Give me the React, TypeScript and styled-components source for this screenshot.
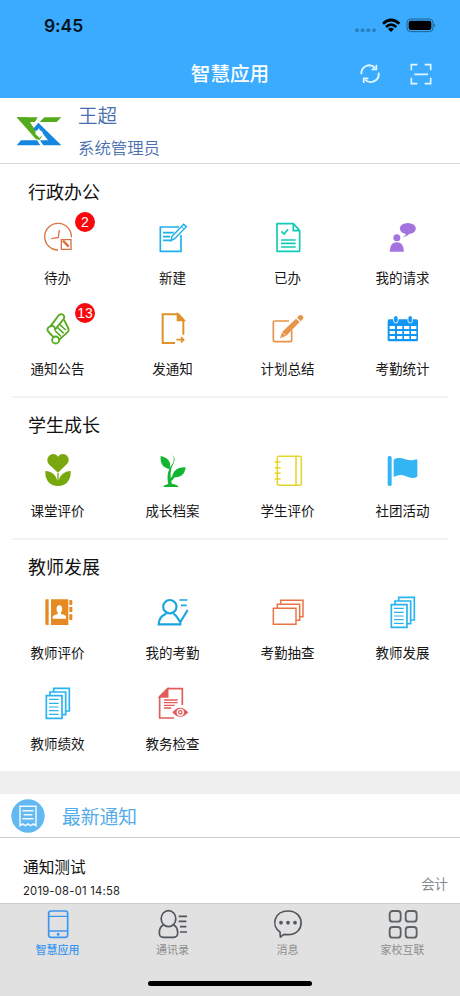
import React from 'react';
import styled, { createGlobalStyle } from 'styled-components';

const GlobalStyle = createGlobalStyle`
  * { box-sizing: border-box; }
  body {
    margin: 0;
    background: #fff;
    font-family: Inter, "Noto Sans CJK SC", sans-serif;
  }
`;

const Screen = styled.div`
  width: 460px;
  height: 996px;
  display: flex;
  flex-direction: column;
  overflow: hidden;
  background: #fff;
`;

const Header = styled.header`
  height: 98px;
  flex: none;
  background: #3aabff;
`;

const StatusBar = styled.div`
  height: 50px;
  padding: 1px 24px 0 44px;
  display: flex;
  align-items: center;
  justify-content: space-between;
`;

const Clock = styled.span`
  font-size: 17.5px;
  line-height: 22px;
  font-weight: 600;
  letter-spacing: -0.1px;
  color: #06121c;
`;

const NavBar = styled.div`
  height: 48px;
  display: grid;
  grid-template-columns: 1fr auto 1fr;
  align-items: center;
`;

const NavTitle = styled.h1`
  grid-column: 2;
  margin: 0;
  font-size: 19.6px;
  line-height: 28px;
  font-weight: 500;
  color: #fff;
`;

const NavActions = styled.div`
  display: flex;
  justify-content: flex-end;
  gap: 30px;
  padding-right: 28px;
`;

const Profile = styled.section`
  height: 66px;
  flex: none;
  display: flex;
  padding-left: 16px;
  gap: 16px;
  border-bottom: 1.5px solid #dadada;
`;

const Logo = styled.svg`
  width: 46px;
  height: 30px;
  margin-top: 18px;
`;

const ProfileText = styled.div`
  color: #4a6fae;
  font-weight: 350;
`;

const Name = styled.div`
  padding-top: 1px;
  font-size: 19.6px;
  line-height: 34px;
`;

const Role = styled.div`
  font-size: 16.4px;
  line-height: 30px;
`;

const Section = styled.section`
  flex: none;
  display: flow-root;
`;

const SectionTitle = styled.h2`
  margin: 17px 0 10px 28px;
  font-size: 18px;
  line-height: 24px;
  font-weight: 400;
  color: #111;
`;

const Grid = styled.div`
  display: grid;
  grid-template-columns: repeat(4, 1fr);
`;

const Tile = styled.div`
  height: 91px;
  padding-top: 7px;
  display: flex;
  flex-direction: column;
  align-items: center;
  gap: 14px;
`;

const IconBox = styled.div`
  position: relative;
  width: 32px;
  height: 32px;
`;

const IconSvg = styled.svg`
  display: block;
  width: 32px;
  height: 32px;
  overflow: visible;
`;

const Badge = styled.span`
  position: absolute;
  left: 33.5px;
  top: -10px;
  width: 20px;
  height: 20px;
  border-radius: 50%;
  background: #f8070c;
  color: #fff;
  font-family: "Liberation Sans", sans-serif;
  font-size: 14px;
  line-height: 20px;
  text-align: center;
`;

const TileLabel = styled.span`
  font-size: 13.5px;
  line-height: 20px;
  color: #161616;
`;

const Divider = styled.div`
  flex: none;
  height: 2px;
  margin: -1px 12px;
  background: #f3f3f3;
`;

const Gap = styled.div`
  flex: none;
  height: 23px;
  margin-top: -1px;
  background: #efefef;
`;

const NoticeHead = styled.div`
  flex: none;
  height: 44px;
  padding-left: 11px;
  display: flex;
  align-items: center;
  gap: 17px;
  border-bottom: 1px solid #cfcfcf;
`;

const NoticeTitle = styled.h2`
  margin: 0;
  padding-top: 4px;
  font-size: 18.8px;
  line-height: 28px;
  font-weight: 400;
  color: #53ace9;
`;

const NoticeItem = styled.article`
  flex: 1;
  display: flex;
  justify-content: space-between;
  padding: 17px 12px 0 23px;
`;

const ItemTitle = styled.div`
  font-size: 15.7px;
  line-height: 26px;
  color: #111;
`;

const ItemDate = styled.div`
  font-size: 11.2px;
  line-height: 20px;
  letter-spacing: 0.25px;
  color: #222;
`;

const Author = styled.div`
  padding-top: 19px;
  font-size: 13.4px;
  line-height: 20px;
  color: #83898f;
`;

const TabBar = styled.nav`
  flex: none;
  height: 93px;
  background: #e1e1e1;
  border-top: 1px solid #cbcbcb;
`;

const Tabs = styled.div`
  height: 76px;
  display: grid;
  grid-template-columns: repeat(4, 1fr);
`;

const Tab = styled.div<{ $active?: boolean }>`
  padding-top: 4px;
  display: flex;
  flex-direction: column;
  align-items: center;
  gap: 2px;
  font-size: 11px;
  line-height: 16px;
  font-weight: ${p => (p.$active ? 500 : 400)};
  color: ${p => (p.$active ? '#3c97ef' : '#8e8e8e')};
`;

const HomeIndicator = styled.div`
  width: 164px;
  height: 5px;
  margin: 1px auto 0;
  border-radius: 3px;
  background: #000;
`;

type IconProps = { color: string; w?: number; children: React.ReactNode };

const LineIcon = ({ color, w = 5, children }: IconProps) => (
  <IconSvg viewBox="0 0 96 96" fill="none" stroke={color} strokeWidth={w}>
    {children}
  </IconSvg>
);

const PendingIcon = () => (
  <LineIcon color="#d9733f" w={4}>
    <path d="M88 46A40 40 0 1 0 48 84" />
    <path d="M52 24L49 46L28 50" />
    <path d="M58 53H87V82H58Z" />
    <path d="M63 56L80 74" strokeWidth="7" />
  </LineIcon>
);

const CreateIcon = () => (
  <LineIcon color="#1fb0ea">
    <path d="M66 15H10V88H72V39" />
    <path d="M18 32H50M18 44H39M18 55H41" />
    <path d="M42 56L45 43L80 7L88 14L53 50Z" strokeWidth="4.5" />
    <path d="M73 14L81 21" strokeWidth="3" />
  </LineIcon>
);

const DoneIcon = () => (
  <LineIcon color="#10ccb4">
    <path d="M15 5H64L83 26V88H15Z" strokeLinejoin="round" />
    <path d="M64 6V26H83" />
    <path d="M28 28L36 36L48 22M27 54H71M27 64H71M27 75H71" />
  </LineIcon>
);

const RequestIcon = () => (
  <IconSvg viewBox="0 0 96 96" fill="#a373df">
    <ellipse cx="62.5" cy="19.5" rx="24" ry="16.5" />
    <path d="M54 32L57 38L48 45Q62 43 69 33Z" />
    <circle cx="29.5" cy="47" r="10.5" />
    <path d="M8 89Q9 61 29.5 61Q50 61 51 89Z" />
  </IconSvg>
);

const ScrollIcon = () => (
  <LineIcon color="#55ab1d" w={5.5}>
    <path d="M25 40L51 6C60-1 71 8 65 18L39 50" />
    <path d="M25 40C15 43 14 51 20 57L36 74M25 40C35 36 42 44 38 52" />
    <path d="M66 20L80 48Q81 53 76 58L52 80" />
    <circle cx="41" cy="81" r="10.5" />
    <path d="M39 53L57 70M47 44L65 61M54 35L71 51" strokeWidth="4.5" />
  </LineIcon>
);

const SendIcon = () => (
  <LineIcon color="#df922a" w={6}>
    <path d="M54 90H17V4H64L79 20V65" />
    <path d="M62 4V22H80Z" fill="#df922a" />
    <path d="M58 80H80M72 72L80 80L72 88" strokeWidth="5" />
  </LineIcon>
);

const PlanIcon = () => (
  <LineIcon color="#e8944a">
    <path d="M51 24H9Q4 24 4 29V81Q4 86 9 86H54Q59 86 59 81V52" />
    <path d="M24 76L31 56L72 17L83 27L43 68Z" fill="#e8944a" stroke="none" />
    <path d="M75 14L82 7Q87 4 92 9Q96 14 93 18L86 25Z" fill="#e8944a" stroke="none" />
    <path d="M31 58L41 67" stroke="#fff" strokeWidth="2" />
  </LineIcon>
);

const CalendarIcon = () => (
  <IconSvg viewBox="0 0 96 96" fill="#1296f3">
    <rect x="2" y="19" width="91" height="66" rx="5" />
    {[39, 54, 69].map(y =>
      [8, 30, 51, 72].map(x => <rect key={`${x}-${y}`} x={x} y={y} width="16" height="9" fill="#fff" />),
    )}
    <rect x="20" y="8" width="13" height="22" rx="6.5" stroke="#fff" strokeWidth="2.5" />
    <rect x="63" y="8" width="13" height="22" rx="6.5" stroke="#fff" strokeWidth="2.5" />
  </IconSvg>
);

const FlowerIcon = () => (
  <IconSvg viewBox="0 0 96 96" fill="#78a80e">
    <path d="M48 53L22 29C9 16 19-3 35-3Q44-3 48 5Q52-3 62-3C78-3 87 15 74 28Z" />
    <path d="M10 48C29 49 42 60 46 77V54H50V77C54 60 67 49 86 48C88 75 72 93 48 93C24 93 8 75 10 48Z" />
  </IconSvg>
);

const SproutIcon = () => (
  <IconSvg viewBox="0 0 96 96" fill="#12b530">
    <path d="M11 3C33 8 44 21 38 42C18 38 9 27 11 3Z" />
    <path d="M86 37C83 60 67 72 45 65C50 45 64 36 86 37Z" />
    <path d="M46 0Q58 11 49 27C40 43 38 60 45 88H34C29 64 32 47 44 30Q56 15 46 0Z" />
    <path d="M40 70Q45 64 57 57L60 61Q49 69 44 79Z" />
    <path d="M18 96Q22 89 34 87H48Q61 89 65 96Z" />
  </IconSvg>
);

const NotebookIcon = () => (
  <LineIcon color="#e2d62c" w={4.5}>
    <rect x="16" y="4" width="72" height="87" rx="4" />
    <path d="M72 5V91M8 21H26M8 38H26M8 55H26M8 72H26" />
  </LineIcon>
);

const FlagIcon = () => (
  <IconSvg viewBox="0 0 96 96" fill="#32b5f2">
    <rect x="2" y="3" width="12" height="90" rx="5" />
    <path d="M20 14C43 0 59 21 80 15Q91 10 91 16V65C71 76 56 59 42 60Q31 60 20 66Z" />
  </IconSvg>
);

const ContactBookIcon = () => (
  <IconSvg viewBox="0 0 96 96" fill="#e58a22">
    <path d="M14 7H20V84H14Q10 84 10 80V11Q10 7 14 7ZM27 7H79V84H27Z" />
    <path d="M82 9H88Q91 9 91 12V24H82ZM82 30H91V45H82ZM82 52H91V66Q91 69 88 69H82Z" />
    <ellipse cx="52" cy="36" rx="8.5" ry="11" fill="#fff" />
    <path d="M47 42H57V51Q70 54 72 58V65H32V58Q36 53 47 51Z" fill="#fff" />
  </IconSvg>
);

const AttendanceIcon = () => (
  <LineIcon color="#1aa5dd" w={6.5}>
    <circle cx="38.5" cy="29" r="20" />
    <path d="M28 50Q6 57 5 82H70V76M49 50Q57 53 60 61L70 75L92 39" />
    <path d="M67 9H91M72 25H89" strokeWidth="5" />
  </LineIcon>
);

const FoldersIcon = () => (
  <LineIcon color="#ea7444" w={4.5}>
    <path d="M4 34H72V82H4Z" />
    <path d="M16 33V22H83V70H73M26 21V10H93V59H84" />
  </LineIcon>
);

const PapersIcon = () => (
  <LineIcon color="#27b4f0">
    <path d="M13 23H60V91H13Z" />
    <path d="M24 22V12H71V80H61M35 11V1H82V69H72" />
    <path d="M21 34H50M21 46H50M21 57H50M21 68H50M21 79H50" strokeWidth="3.5" />
  </LineIcon>
);

const InspectIcon = () => (
  <LineIcon color="#e25c5c">
    <path d="M51 90H8V26L32 2H76V51" />
    <path d="M8 27H32V3Z" fill="#e25c5c" />
    <path d="M21 36H62M21 44H62M21 52H53M21 60H43" strokeWidth="4" />
    <path d="M46 73Q69 45 94 73Q69 100 46 73Z" fill="#e25c5c" stroke="none" />
    <circle cx="70" cy="73" r="9" fill="#e25c5c" stroke="#fff" strokeWidth="4" />
    <circle cx="70" cy="73" r="3" fill="#fff" stroke="none" />
  </LineIcon>
);

type App = { label: string; Icon: () => React.ReactElement; badge?: number };

const groups: { title: string; apps: App[] }[] = [
  {
    title: '行政办公',
    apps: [
      { label: '待办', Icon: PendingIcon, badge: 2 },
      { label: '新建', Icon: CreateIcon },
      { label: '已办', Icon: DoneIcon },
      { label: '我的请求', Icon: RequestIcon },
      { label: '通知公告', Icon: ScrollIcon, badge: 13 },
      { label: '发通知', Icon: SendIcon },
      { label: '计划总结', Icon: PlanIcon },
      { label: '考勤统计', Icon: CalendarIcon },
    ],
  },
  {
    title: '学生成长',
    apps: [
      { label: '课堂评价', Icon: FlowerIcon },
      { label: '成长档案', Icon: SproutIcon },
      { label: '学生评价', Icon: NotebookIcon },
      { label: '社团活动', Icon: FlagIcon },
    ],
  },
  {
    title: '教师发展',
    apps: [
      { label: '教师评价', Icon: ContactBookIcon },
      { label: '我的考勤', Icon: AttendanceIcon },
      { label: '考勤抽查', Icon: FoldersIcon },
      { label: '教师发展', Icon: PapersIcon },
      { label: '教师绩效', Icon: PapersIcon },
      { label: '教务检查', Icon: InspectIcon },
    ],
  },
];

const StatusIcons = () => (
  <svg width="82" height="16" viewBox="0 0 246 48">
    <g fill="#2b80bf">
      <circle cx="9" cy="37" r="6" />
      <circle cx="26" cy="37" r="6" />
      <circle cx="43" cy="37" r="6" />
      <circle cx="60" cy="37" r="6" />
    </g>
    <g fill="none" stroke="#000" strokeWidth="8">
      <path d="M87 17Q111-5 136 17" />
      <path d="M96 27Q111 13 127 27" />
    </g>
    <path d="M102 33Q111 25 120 33L111 42Z" />
    <rect x="159" y="3" width="78" height="38" rx="11" fill="none" stroke="#21618f" strokeWidth="3" />
    <rect x="164" y="8" width="68" height="28" rx="7" />
    <path d="M240 16Q246 22 240 28Z" fill="#21618f" />
  </svg>
);

const RefreshIcon = () => (
  <svg width="20" height="22" viewBox="0 0 60 66" fill="none" stroke="#e4f6ff" strokeWidth="5.5">
    <path d="M4 34C3 10 29-2 45 15M56 29C59 53 31 66 15 50" />
    <path d="M49 5V19H35M11 60V46H25" strokeWidth="5" />
  </svg>
);

const ScanIcon = () => (
  <svg width="22" height="22" viewBox="0 0 66 66" fill="none" stroke="#e4f6ff" strokeWidth="5">
    <path d="M4 22V5H22M44 5H62V22M62 44V62H44M22 62H4V44M13 34H54" />
  </svg>
);

const PhoneIcon = () => (
  <LineIcon color="#3c97ef">
    <rect x="20" y="9" width="57" height="79" rx="7" />
    <path d="M20 25H77M20 69H77" strokeWidth="4" />
    <circle cx="48.5" cy="78.5" r="2" />
  </LineIcon>
);

const ContactsIcon = () => (
  <LineIcon color="#50565b">
    <ellipse cx="34.5" cy="32" rx="22" ry="24" />
    <path d="M20 51Q7 55 7 75Q7 88 19 88H49Q62 88 62 75Q62 55 49 51" />
    <path d="M65 25H90M65 40H88M69 56H88M69 72H90" />
  </LineIcon>
);

const ChatIcon = () => (
  <LineIcon color="#50565b">
    <path d="M24 72C-5 52 8 9 48 9C100 9 101 80 48 80Q40 80 36 79L25 87Z" strokeLinejoin="round" />
    <g fill="#50565b" stroke="none">
      <circle cx="27" cy="44" r="5.5" />
      <circle cx="48" cy="44" r="5.5" />
      <circle cx="69" cy="44" r="5.5" />
    </g>
  </LineIcon>
);

const ModulesIcon = () => (
  <LineIcon color="#5c6165" w={5.5}>
    {[9, 57].map(y => [8, 56].map(x => <rect key={`${x}-${y}`} x={x} y={y} width="33" height="32" rx="9" />))}
  </LineIcon>
);

const NoticeIcon = () => (
  <svg width="34" height="34" viewBox="0 0 102 102" fill="none" stroke="#f0f9ff" strokeWidth="4.5">
    <circle cx="51" cy="51" r="50" fill="#62b8f2" stroke="none" />
    <path d="M27 80V22H75V80L67 75L59 80L51 75L43 80L35 75Z" />
    <path d="M34 35H68M38 47H64M34 59H68" />
  </svg>
);

const tabs = [
  { label: '智慧应用', Icon: PhoneIcon, active: true },
  { label: '通讯录', Icon: ContactsIcon },
  { label: '消息', Icon: ChatIcon },
  { label: '家校互联', Icon: ModulesIcon },
];

export default function App() {
  return (
    <Screen>
      <GlobalStyle />
      <Header>
        <StatusBar>
          <Clock>9:45</Clock>
          <StatusIcons />
        </StatusBar>
        <NavBar>
          <NavTitle>智慧应用</NavTitle>
          <NavActions>
            <RefreshIcon />
            <ScanIcon />
          </NavActions>
        </NavBar>
      </Header>
      <Profile>
        <Logo viewBox="0 0 138 90">
          <path d="M2 4H65L57 18H37L60 42L51 52L65 70L81 57L70 72Z" fill="#56aa1d" />
          <path d="M2 4H34L72 71L60 70Z" fill="#56aa1d" />
          <path d="M85 4H136L122 18H71Z" fill="#56aa1d" />
          <path d="M67 20L136 88H82L72 73H96L73 43L59 44L52 38Z" fill="#1587df" />
          <path d="M15 73H63L73 88H2Z" fill="#1587df" />
          <path d="M61 48L69 36L72 45L81 48L74 56L70 53L66 61L57 53Z" fill="#fff" />
        </Logo>
        <ProfileText>
          <Name>王超</Name>
          <Role>系统管理员</Role>
        </ProfileText>
      </Profile>
      {groups.map((group, i) => (
        <React.Fragment key={group.title}>
          {i > 0 && <Divider />}
          <Section>
            <SectionTitle>{group.title}</SectionTitle>
            <Grid>
              {group.apps.map(({ label, Icon, badge }) => (
                <Tile key={label}>
                  <IconBox>
                    <Icon />
                    {badge && <Badge>{badge}</Badge>}
                  </IconBox>
                  <TileLabel>{label}</TileLabel>
                </Tile>
              ))}
            </Grid>
          </Section>
        </React.Fragment>
      ))}
      <Gap />
      <NoticeHead>
        <NoticeIcon />
        <NoticeTitle>最新通知</NoticeTitle>
      </NoticeHead>
      <NoticeItem>
        <div>
          <ItemTitle>通知测试</ItemTitle>
          <ItemDate>2019-08-01 14:58</ItemDate>
        </div>
        <Author>会计</Author>
      </NoticeItem>
      <TabBar>
        <Tabs>
          {tabs.map(({ label, Icon, active }) => (
            <Tab key={label} $active={active}>
              <Icon />
              {label}
            </Tab>
          ))}
        </Tabs>
        <HomeIndicator />
      </TabBar>
    </Screen>
  );
}
